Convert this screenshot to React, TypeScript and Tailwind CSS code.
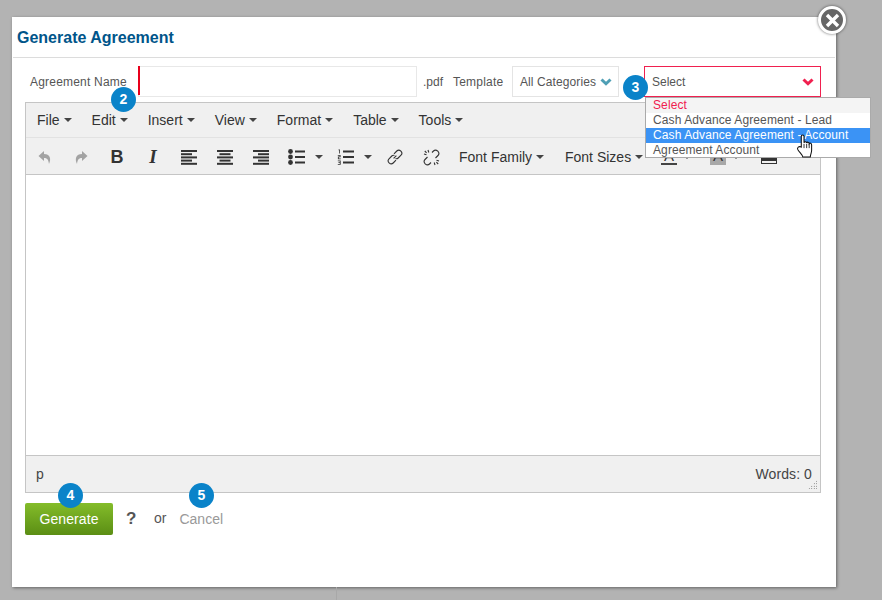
const font = { fontFamily: '"Liberation Sans", Arial, sans-serif' };

const menus = ['File', 'Edit', 'Insert', 'View', 'Format', 'Table', 'Tools'];

function Caret({ className = '' }: { className?: string }) {
  return (
    <span
      className={`inline-block w-0 h-0 border-l-[4px] border-r-[4px] border-t-[4px] border-l-transparent border-r-transparent border-t-[#444] ${className}`}
    />
  );
}

function Badge({ n, className }: { n: number; className: string }) {
  return (
    <div
      className={`absolute w-[25px] h-[25px] rounded-full bg-[#0a83c9] text-white text-[14px] font-bold flex items-center justify-center z-20 ${className}`}
    >
      {n}
    </div>
  );
}

function ArrowIcon({ flip }: { flip?: boolean }) {
  return (
    <svg width="14" height="15" viewBox="0 0 14 15" className={flip ? '-scale-x-100' : ''}>
      <path d="M6 1 L0.5 6 L6 11 V8 C9 8 10.5 9.5 11 14 C13.5 8.5 12 4.2 6 4 Z" fill="#a3a3a3" />
    </svg>
  );
}

function LinesIcon({ align }: { align: 'left' | 'center' | 'right' }) {
  const rows = [0, 3.2, 6.4, 9.6, 12.8];
  return (
    <svg width="16" height="15" viewBox="0 0 16 15">
      {rows.map((y, i) => {
        const width = i % 2 === 0 ? 16 : 11;
        const x = align === 'left' ? 0 : align === 'center' ? (16 - width) / 2 : 16 - width;
        return <rect key={i} x={x} y={y} width={width} height="2" fill="#333" />;
      })}
    </svg>
  );
}

function BulletIcon() {
  return (
    <svg width="17" height="16" viewBox="0 0 17 16">
      <circle cx="2.5" cy="2.5" r="2.4" fill="#333" />
      <circle cx="2.5" cy="8" r="2.4" fill="#333" />
      <circle cx="2.5" cy="13.5" r="2.4" fill="#333" />
      <rect x="7" y="1.5" width="10" height="2" fill="#333" />
      <rect x="7" y="7" width="10" height="2" fill="#333" />
      <rect x="7" y="12.5" width="10" height="2" fill="#333" />
    </svg>
  );
}

function NumberIcon() {
  return (
    <svg width="17" height="16" viewBox="0 0 17 16">
      <path d="M1.5 0.5 H3 V4.5 H2.2 V1.3 H1.5 Z" fill="#333" />
      <path d="M0.8 6 H3.6 V8.3 H1.8 V9.4 H3.8 V10.2 H0.9 V7.6 H2.7 V6.8 H0.8 Z" fill="#333" />
      <path d="M0.8 11.5 H3.7 V15.8 H0.8 V15 H2.8 V14 H1.4 V13.3 H2.8 V12.3 H0.8 Z" fill="#333" />
      <rect x="6" y="1.5" width="11" height="2" fill="#333" />
      <rect x="6" y="7" width="11" height="2" fill="#333" />
      <rect x="6" y="12.5" width="11" height="2" fill="#333" />
    </svg>
  );
}

function LinkIcon() {
  return (
    <svg width="16" height="16" viewBox="0 0 16 16" fill="none" stroke="#333" strokeWidth="1.1">
      <path d="M6.6 9.4 L9.4 6.6" />
      <path d="M7 4.8 L9.8 2 C10.9 0.9 12.6 0.9 13.9 2.1 C15.1 3.4 15.1 5.1 14 6.2 L11.2 9 C10.4 9.8 9.4 9.9 8.6 9.6" />
      <path d="M9 11.2 L6.2 14 C5.1 15.1 3.4 15.1 2.1 13.9 C0.9 12.6 0.9 10.9 2 9.8 L4.8 7 C5.6 6.2 6.6 6.1 7.4 6.4" />
    </svg>
  );
}

function UnlinkIcon() {
  return (
    <svg width="17" height="17" viewBox="0 0 17 17" fill="none" stroke="#333" strokeWidth="1.1">
      <path d="M9 3.5 L10.5 2 C11.6 0.9 13.4 0.9 14.8 2.2 C16.1 3.6 16.1 5.4 15 6.5 L12.5 9" />
      <path d="M8 13.5 L6.5 15 C5.4 16.1 3.6 16.1 2.2 14.8 C0.9 13.4 0.9 11.6 2 10.5 L4.5 8" />
      <path d="M5 1 L5.8 3.5 M1 5 L3.5 5.8 M1.8 2 L3.6 3.8 M12 16 L11.2 13.5 M16 12 L13.5 11.2 M15.2 15 L13.4 13.2" />
    </svg>
  );
}

function ToolBtn({ children, className = 'w-[36px]' }: { children: React.ReactNode; className?: string }) {
  return <div className={`flex items-center justify-center h-full shrink-0 ${className}`}>{children}</div>;
}

function Chevron({ color }: { color: string }) {
  return (
    <svg width="12" height="8" viewBox="0 0 12 8">
      <path d="M1.5 1.5 L6 5.8 L10.5 1.5" fill="none" stroke={color} strokeWidth="3" />
    </svg>
  );
}

function HandCursor() {
  return (
    <svg width="19" height="26" viewBox="0 0 18 24" className="absolute left-[796px] top-[133px] z-30">
      <path
        d="M5 13 V3 C5 1.2 7.6 1.2 7.6 3 V9 C7.8 7.6 10 7.6 10.1 9.2 C10.4 8 12.4 8 12.5 9.8 C13 8.9 14.8 9.2 14.8 11 V16 C14.8 18.5 13.8 19.5 13.5 22.5 H6.5 C6 20 3.8 18.6 1.8 15.5 C0.6 13.5 2.8 11.8 5 13 Z"
        fill="#fff"
        stroke="#111"
        strokeWidth="1"
      />
      <path d="M7.6 10 V14 M10.1 10 V14 M12.5 10 V14" stroke="#111" strokeWidth="0.8" />
    </svg>
  );
}

export default function App() {
  return (
    <div className="relative w-[882px] h-[600px] overflow-hidden bg-[#b3b3b3] pt-[17px] pl-[12px]" style={font}>
      <div className="absolute left-[336px] top-[587px] w-px h-[13px] bg-[#a8a8a8]" />
      <div className="w-[824px] h-[570px] bg-white shadow-[1px_1px_3px_rgba(0,0,0,0.45)] flex flex-col">
        <div className="h-[41px] mx-px border-b border-[#dcdcdc] flex items-center pl-[4px] text-[16px] font-bold text-[#00558a] pt-[1px]">
          Generate Agreement
        </div>

        <div className="flex items-center h-[31px] mt-[8px] pl-[18px] text-[12px] text-[#555]">
          <span className="w-[108px] tracking-[0.2px]">Agreement Name</span>
          <div className="w-[279px] h-[31px] border border-[#e8e8e8] flex items-start">
            <span className="w-[2px] h-[29px] -ml-px -mt-px bg-[#e8001c]" />
          </div>
          <span className="ml-[6px] w-[30px]">.pdf</span>
          <span className="w-[59px] tracking-[0.2px]">Template</span>
          <div className="w-[107px] h-[31px] border border-[#e4e4e4] flex items-center pl-[7px] gap-[4px] whitespace-nowrap tracking-[0.1px]">
            All Categories
            <Chevron color="#4f9fb5" />
          </div>
          <div className="ml-[25px] w-[177px] h-[31px] border border-[#f0204f] flex items-center justify-between pl-[7px] pr-[6px]">
            Select
            <Chevron color="#f0204f" />
          </div>
        </div>

        <div className="ml-[13px] mt-[5px] w-[796px] h-[391px] border border-[#c5c5c5] flex flex-col">
          <div className="h-[35px] bg-[#f0f0f0] border-b border-[#e2e2e2] flex items-center pl-[11px] gap-[20px] text-[14px] text-[#333]">
            {menus.map((m) => (
              <div key={m} className="flex items-center gap-[4px]">
                {m}
                <Caret />
              </div>
            ))}
          </div>
          <div className="h-[37px] bg-[#f0f0f0] border-b border-[#c5c5c5] flex items-center pl-px pt-[2px] text-[14px] text-[#333] overflow-hidden">
            <ToolBtn><ArrowIcon /></ToolBtn>
            <ToolBtn><ArrowIcon flip /></ToolBtn>
            <ToolBtn><span className="text-[18px] font-bold">B</span></ToolBtn>
            <ToolBtn><span className="text-[19px] font-bold italic" style={{ fontFamily: '"Liberation Serif", serif' }}>I</span></ToolBtn>
            <ToolBtn><LinesIcon align="left" /></ToolBtn>
            <ToolBtn><LinesIcon align="center" /></ToolBtn>
            <ToolBtn><LinesIcon align="right" /></ToolBtn>
            <ToolBtn className="w-[49px] gap-[10px] pl-[3px]"><BulletIcon /><Caret /></ToolBtn>
            <ToolBtn className="w-[49px] gap-[10px] pl-[3px]"><NumberIcon /><Caret /></ToolBtn>
            <ToolBtn><LinkIcon /></ToolBtn>
            <ToolBtn><UnlinkIcon /></ToolBtn>
            <div className="ml-[10px] flex items-center gap-[4px] whitespace-nowrap w-[106px]">
              Font Family
              <Caret />
            </div>
            <div className="flex items-center gap-[4px] whitespace-nowrap w-[96px]">
              Font Sizes
              <Caret />
            </div>
            <div className="flex flex-col items-center w-[16px] text-[15px] leading-[15px] -mt-[1px]">
              A
              <span className="w-[16px] h-[2px] bg-[#444]" />
            </div>
            <Caret className="ml-[6px]" />
            <div className="ml-[19px] flex flex-col items-center w-[16px] h-[17px] bg-[#a8a8a8] text-[15px] leading-[15px] -mt-[1px]">
              A
            </div>
            <Caret className="ml-[6px]" />
            <div className="ml-[21px] w-[16px] h-[15px] border border-[#333] flex items-end pb-[2px] -mt-[2px]">
              <span className="w-full h-[5px] bg-[#333]" />
            </div>
          </div>
          <div className="flex-1 bg-white" />
          <div className="relative h-[37px] bg-[#f0f0f0] border-t border-[#c5c5c5] flex items-center justify-between pl-[10px] pr-[8px] text-[14px] text-[#444]">
            <span>p</span>
            <span className="tracking-[0.1px]">Words: 0</span>
            <div className="absolute right-[3px] bottom-[3px] w-[9px] h-[9px] bg-[radial-gradient(#555_0.7px,transparent_0.8px)] bg-[length:2.5px_2.5px] [clip-path:polygon(100%_0,100%_100%,0_100%)]" />
          </div>
        </div>

        <div className="flex items-center ml-[13px] mt-[10px] text-[14px]">
          <div className="w-[88px] h-[32px] rounded-[2px] bg-gradient-to-b from-[#84bd2a] to-[#5b8e14] text-white flex items-center justify-center tracking-[0.1px]">
            Generate
          </div>
          <span className="ml-[13px] w-[28px] text-[17px] font-bold text-[#555]">?</span>
          <span className="text-[#555] -mt-[1px]">or</span>
          <span className="ml-[13px] text-[#999]">Cancel</span>
        </div>
      </div>

      <div className="absolute left-[818px] top-[6px] w-[28px] h-[28px] rounded-full bg-[#666] border-[3px] border-white shadow-[0_0_3px_rgba(0,0,0,0.6)] flex items-center justify-center z-20">
        <svg width="15" height="15" viewBox="0 0 15 15">
          <path d="M2 2 L13 13 M13 2 L2 13" stroke="#fff" strokeWidth="3.4" />
        </svg>
      </div>

      <Badge n={2} className="left-[111px] top-[87px]" />
      <Badge n={3} className="left-[623px] top-[75px]" />
      <Badge n={4} className="left-[58px] top-[483px]" />
      <Badge n={5} className="left-[189px] top-[483px]" />

      <div className="absolute left-[645px] top-[97px] w-[226px] h-[61px] bg-white border border-[#aaa] text-[12px] leading-[15px] tracking-[0.1px] text-[#555] z-10">
        <div className="bg-[#f4f4f4] text-[#f0204f] pl-[7px]">Select</div>
        <div className="pl-[7px]">Cash Advance Agreement - Lead</div>
        <div className="bg-[#3b93f5] text-white pl-[7px]">Cash Advance Agreement - Account</div>
        <div className="pl-[7px]">Agreement Account</div>
      </div>

      <HandCursor />
    </div>
  );
}
